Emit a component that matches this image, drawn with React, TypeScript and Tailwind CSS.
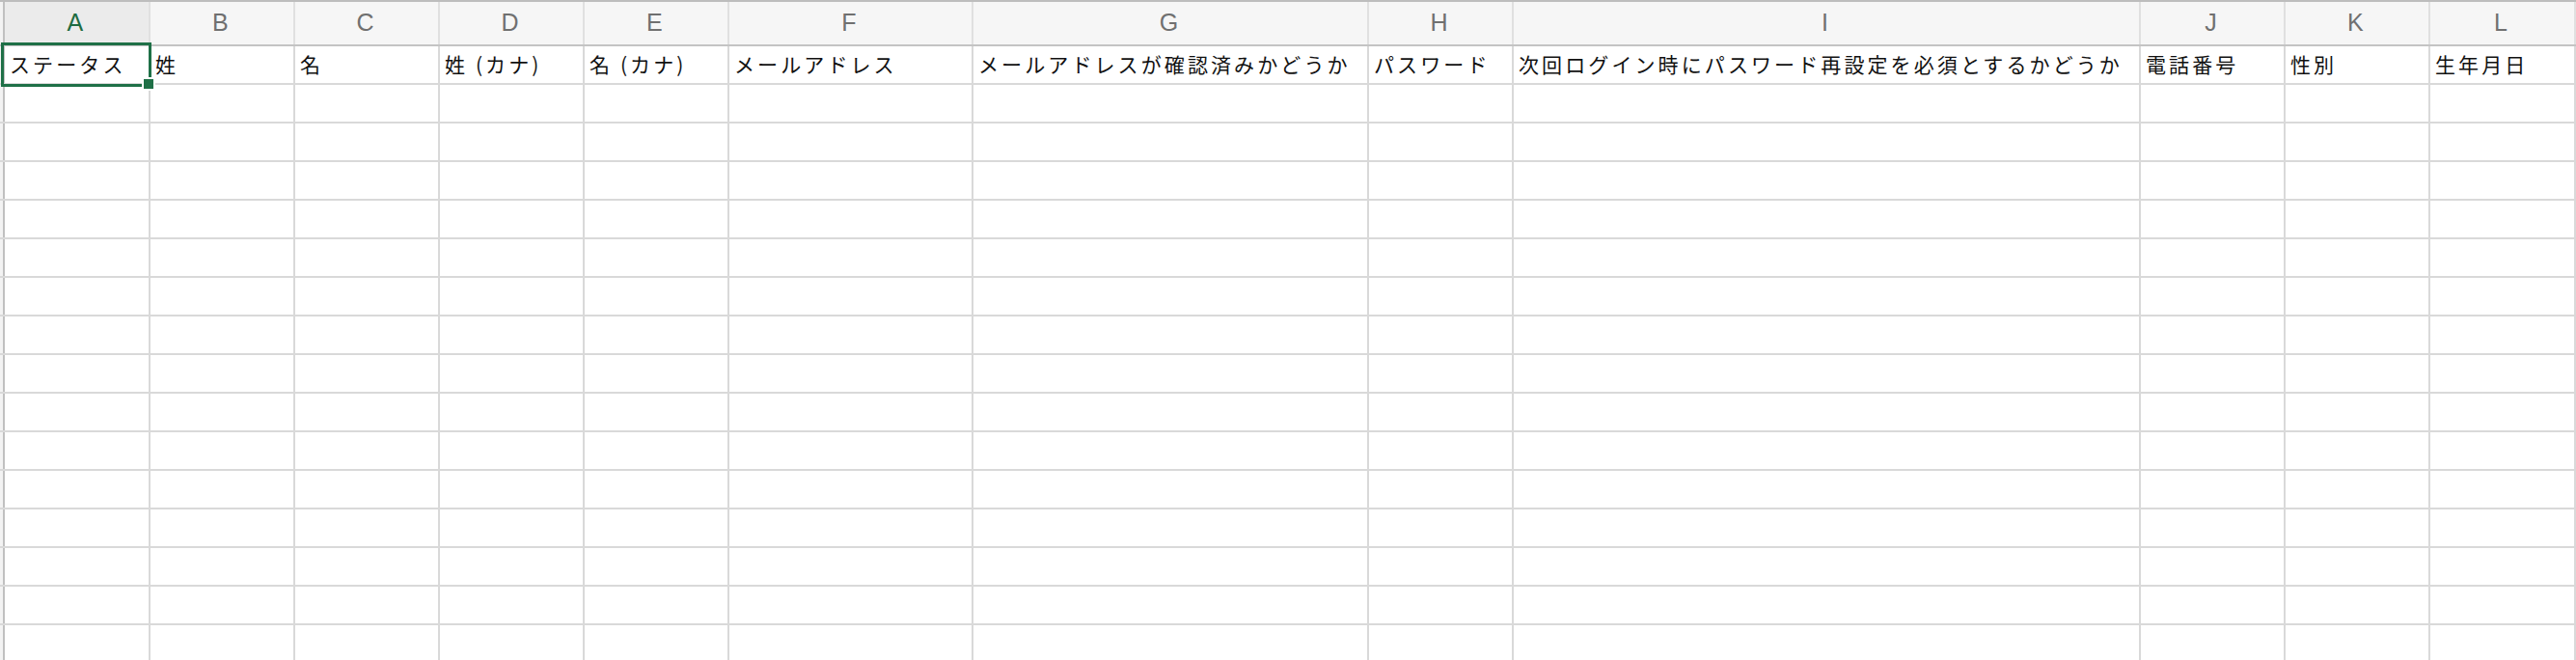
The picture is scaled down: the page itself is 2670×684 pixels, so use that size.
import React from "react";

const columns = [
  { key: "A", width: "w-[151px]", label: "ステータス" },
  { key: "B", width: "w-[150px]", label: "姓" },
  { key: "C", width: "w-[150px]", label: "名" },
  { key: "D", width: "w-[150px]", label: "姓 (カナ)" },
  { key: "E", width: "w-[150px]", label: "名 (カナ)" },
  { key: "F", width: "w-[253px]", label: "メールアドレス" },
  { key: "G", width: "w-[410px]", label: "メールアドレスが確認済みかどうか" },
  { key: "H", width: "w-[150px]", label: "パスワード" },
  { key: "I", width: "w-[650px]", label: "次回ログイン時にパスワード再設定を必須とするかどうか" },
  { key: "J", width: "w-[150px]", label: "電話番号" },
  { key: "K", width: "w-[150px]", label: "性別" },
  { key: "L", width: "flex-1", label: "生年月日" },
];

const EMPTY_ROWS = 16;

function HeaderRow() {
  return (
    <div className="flex h-[48px] shrink-0 border-t-2 border-b-2 border-t-[#bdbdbd] border-b-[#c4c4c4]">
      <div className="w-[5px] shrink-0 bg-[#f3f3f3] border-r-2 border-[#c0c0c0]" />
      {columns.map((c) => (
        <div
          key={c.key}
          className={`${c.width} shrink-0 flex items-center justify-center border-r-2 border-[#e0e0e0] ${
            c.key === "A" ? "bg-[#ebebeb] text-[#1e6b41]" : "bg-[#f6f6f6] text-[#707070]"
          } text-[25px] font-['Liberation_Sans',sans-serif]`}
        >
          {c.key}
        </div>
      ))}
    </div>
  );
}

function DataRow({ labels }: { labels?: boolean }) {
  return (
    <div className="flex h-[40px] shrink-0 border-b-2 border-[#d9d9d9]">
      <div className="w-[5px] shrink-0 bg-[#f3f3f3] border-r-2 border-[#c0c0c0]" />
      {columns.map((c) => (
        <div
          key={c.key}
          className={`${c.width} shrink-0 flex items-center pl-[5px] border-r-2 border-[#d9d9d9] whitespace-nowrap overflow-hidden`}
        >
          {labels && <span>{c.label}</span>}
        </div>
      ))}
    </div>
  );
}

export default function App() {
  return (
    <div className="relative w-[2670px] h-[684px] overflow-hidden bg-white text-[#111] text-[21px] tracking-[3.1px] font-['Noto_Sans_CJK_JP','Noto_Sans',sans-serif]">
      <div className="flex flex-col">
        <HeaderRow />
        <DataRow labels />
        {Array.from({ length: EMPTY_ROWS }).map((_, i) => (
          <DataRow key={i} />
        ))}
      </div>

      {/* active cell A1 */}
      <div className="absolute left-[1px] top-[44px] w-[156px] h-[46px] border-[3px] border-[#1f7047] pointer-events-none" />
      <div className="absolute left-[147px] top-[80px] w-[14px] h-[14px] bg-white" />
      <div className="absolute left-[149px] top-[82px] w-[10px] h-[10px] bg-[#1f7047]" />
    </div>
  );
}
